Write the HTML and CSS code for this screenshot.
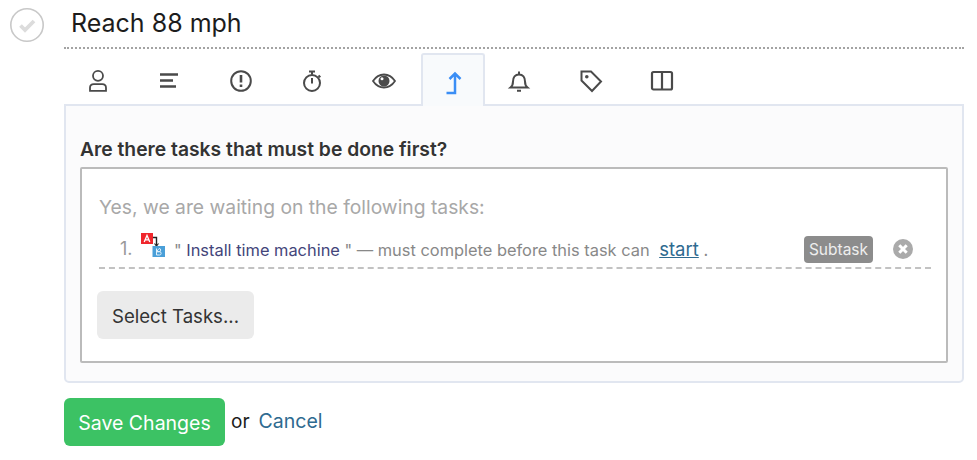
FILE: index.html
```html
<!DOCTYPE html>
<html lang="en">
<head>
  <meta charset="UTF-8" />
  <title>Reach 88 mph</title>
  <link rel="stylesheet" href="styles.css">
</head>
<body>
  <div class="task">
    <div class="check">
      <svg width="36" height="36" viewBox="0 0 36 36">
        <circle cx="17" cy="17" r="16.200" fill="#fff" stroke="#c8c8c8" stroke-width="1.600"/>
        <path d="M10.500 17.500l4.500 4.500 9-9" fill="none" stroke="#dcdcdc" stroke-width="3.800"/>
      </svg>
    </div>
    <div class="main">
      <h1 class="title">Reach 88 mph</h1>
      <div class="tabs">
        <a class="tab">
          <svg width="24" height="24" viewBox="0 0 24 24" fill="none" stroke="#4a4a4a" stroke-width="1.800">
            <circle cx="12" cy="6.800" r="5"/>
            <path d="M4 21.800v-3c0-2.300 1.700-3.600 3.800-3.600h8.400c2.100 0 3.800 1.300 3.800 3.600v3z"/>
          </svg>
        </a>
        <a class="tab">
          <svg width="24" height="24" viewBox="0 0 24 24" fill="none" stroke="#4a4a4a" stroke-width="2.600">
            <path d="M3 5.500h18M3 11.500h13M3 17.500h16"/>
          </svg>
        </a>
        <a class="tab">
          <svg width="24" height="24" viewBox="0 0 24 24" fill="none" stroke="#4a4a4a" stroke-width="2">
            <circle cx="12" cy="12" r="9.800"/>
            <path d="M12 6v7.500M12 15.500v2.500" stroke-width="2.600"/>
          </svg>
        </a>
        <a class="tab">
          <svg width="24" height="24" viewBox="0 0 24 24" fill="none" stroke="#4a4a4a" stroke-width="2">
            <circle cx="12" cy="14" r="8"/>
            <path d="M9 2.500h6M12 2.500v3M12 9v5.500M18.500 6.500l1.800 1.800"/>
          </svg>
        </a>
        <a class="tab">
          <svg width="24" height="24" viewBox="0 0 24 24">
            <path d="M1 12c3-4.500 6.800-6.500 11-6.500S20 7.500 23 12c-3 4.500-6.800 6.500-11 6.500S4 16.500 1 12z" fill="none" stroke="#4a4a4a" stroke-width="1.800"/>
            <circle cx="12" cy="12" r="5.500" fill="#4a4a4a"/>
            <circle cx="10" cy="9.800" r="1.500" fill="#fff"/>
          </svg>
        </a>
        <a class="tab active">
          <svg width="24" height="24" viewBox="0 0 24 24" fill="none" stroke="#3b8ef5" stroke-width="2.500">
            <path d="M5.500 22h8.500V2.500M8.500 8l5.500-5.500L19.500 8"/>
          </svg>
        </a>
        <a class="tab">
          <svg width="24" height="24" viewBox="0 0 24 24" fill="none" stroke="#4a4a4a" stroke-width="2">
            <path d="M3.500 18.500h17c-1.800-1.500-2.500-3-2.500-6 0-4-2.200-7-6-7s-6 3-6 7c0 3-.7 4.500-2.500 6zM12 5.500V2.500M10 21.800h4"/>
          </svg>
        </a>
        <a class="tab">
          <svg width="24" height="24" viewBox="0 0 24 24" fill="none" stroke="#4a4a4a" stroke-width="2">
            <path d="M2.500 2.500h9.500l10 10-9 9.500-10.500-10.500z"/>
            <circle cx="7.800" cy="7.800" r="1.800" fill="#4a4a4a" stroke="none"/>
          </svg>
        </a>
        <a class="tab">
          <svg width="24" height="24" viewBox="0 0 24 24" fill="none" stroke="#4a4a4a" stroke-width="2.200">
            <rect x="2" y="3" width="20" height="17.500" rx="1.500"/>
            <path d="M12 3v17.500"/>
          </svg>
        </a>
      </div>
      <div class="panel">
        <h2 class="question">Are there tasks that must be done first?</h2>
        <div class="box">
          <p class="lead">Yes, we are waiting on the following tasks:</p>
          <div class="dep">
            <span class="num">1.</span>
            <svg class="dep-icon" width="24" height="26" viewBox="0 0 24 26">
              <rect x="0" y="0" width="12" height="11" fill="#f0262c"/>
              <path d="M3.200 9L6 2.500 8.800 9M4.300 6.800h3.400" fill="none" stroke="#fff" stroke-width="1.300"/>
              <path d="M12 4.500h3.500v8" fill="none" stroke="#222" stroke-width="1.400"/>
              <path d="M13.500 10.500l2 2.500 2-2.500" fill="none" stroke="#222" stroke-width="1.100"/>
              <rect x="11.500" y="13" width="12.500" height="11" fill="#4a9fd8"/>
              <path d="M15.500 15.500v6.500h3a1.600 1.600 0 0 0 0-3.300h-3m0 0h2.600a1.600 1.600 0 0 0 0-3.200z" fill="none" stroke="#dff0fb" stroke-width="1"/>
            </svg>
            <span class="dep-text"><span class="quote">"</span> <span class="dep-name">Install time machine</span> <span class="quote">"</span> — must complete before this task can <a class="link-start">start</a> .</span>
            <span class="badge">Subtask</span>
            <svg class="remove" width="20" height="20" viewBox="0 0 20 20">
              <circle cx="10" cy="10" r="10" fill="#aaa"/>
              <path d="M6.300 6.300l7.400 7.400M13.700 6.300l-7.400 7.400" stroke="#fff" stroke-width="3"/>
            </svg>
          </div>
          <button class="select-btn">Select Tasks...</button>
        </div>
      </div>
      <div class="actions">
        <button class="save-btn">Save Changes</button>
        <span class="or">or</span>
        <a class="cancel">Cancel</a>
      </div>
    </div>
  </div>
</body>
</html>
```

FILE: styles.css
```css
:root {
  --line: #e1e6f0;
  --panel-bg: #fbfbfc;
  --link: #2e6a90;
}
* {
  box-sizing: border-box;
}
body {
  font-family: 'Inter', 'Open Sans', Arial, sans-serif;
  background: #fff;
  color: #333;
  margin: 0;
  overflow: hidden;
}
.task {
  display: flex;
  padding: 7px 13px 0 10px;
}
.check {
  width: 54px;
  flex: none;
  padding-top: 1px;
}
.main {
  flex: 1;
}
.title {
  margin: 0;
  padding: 0 0 7px 7px;
  height: 42px;
  font-size: 25px;
  line-height: 33px;
  font-weight: 400;
  color: #1c1c1c;
  border-bottom: 2px dotted #a3a3a3;
}
.tabs {
  display: flex;
  height: 56px;
  padding-top: 4px;
  margin-left: -2px;
}
.tab {
  width: 71.500px;
  display: flex;
  align-items: center;
  justify-content: center;
  padding-top: 4px;
}
.tab.active {
  width: 64px;
  margin: 0 -1px 0 1px;
  height: 53px;
  background: #f8fafc;
  border: 2px solid var(--line);
  border-bottom: none;
  border-radius: 3px 3px 0 0;
  position: relative;
  z-index: 1;
}
.panel {
  height: 279px;
  margin-top: -1px;
  padding: 31px 14px 0;
  background: var(--panel-bg);
  border: 2px solid var(--line);
  border-radius: 0 0 5px 5px;
}
.question {
  margin: 0 0 6px;
  font-size: 19.300px;
  line-height: 24px;
  font-weight: 600;
  color: #333;
}
.box {
  height: 196px;
  padding: 26px 15px 0 17px;
  background: #fff;
  border: 2px solid #bbb;
  border-radius: 2px;
}
.lead {
  margin: 0;
  font-size: 19.300px;
  line-height: 24px;
  color: #a8a8a8;
}
.dep {
  display: flex;
  align-items: center;
  height: 39px;
  margin-top: 11px;
  padding-left: 21px;
  border-bottom: 2px dashed #c2c2c2;
  font-size: 16.400px;
  color: #888;
}
.num {
  width: 21px;
  font-size: 18px;
  color: #999;
}
.dep-icon {
  margin: -5px 9px 0 0;
  flex: none;
}
.dep-text {
  flex: 1;
  white-space: nowrap;
}
.dep-name {
  color: #43457a;
}
.link-start {
  margin-left: 5px;
  font-size: 18.500px;
  color: var(--link);
  text-decoration: underline;
}
.badge {
  width: 69px;
  height: 27px;
  margin-top: 2px;
  line-height: 27px;
  text-align: center;
  font-size: 15.500px;
  color: #eee;
  background: #8c8c8c;
  border-radius: 4px;
}
.remove {
  margin: 0 18px 0 20px;
  flex: none;
}
.select-btn {
  display: block;
  width: 157px;
  height: 48px;
  margin: 22px 0 0 -2px;
  padding: 2px 0 0;
  font-family: inherit;
  font-size: 18.600px;
  color: #333;
  background: #ebebeb;
  border: none;
  border-radius: 6px;
}
.actions {
  display: flex;
  align-items: center;
  gap: 6px;
  margin-top: 15px;
}
.save-btn {
  width: 161px;
  height: 48px;
  padding: 2px 0 0;
  font-family: inherit;
  font-size: 19.500px;
  color: #fff;
  background: #3cc264;
  border: none;
  border-radius: 6px;
}
.or {
  padding-bottom: 2px;
  font-size: 19px;
  color: #1c1c1c;
}
.cancel {
  margin-left: 3px;
  padding-bottom: 2px;
  font-size: 19.500px;
  color: var(--link);
}
```
